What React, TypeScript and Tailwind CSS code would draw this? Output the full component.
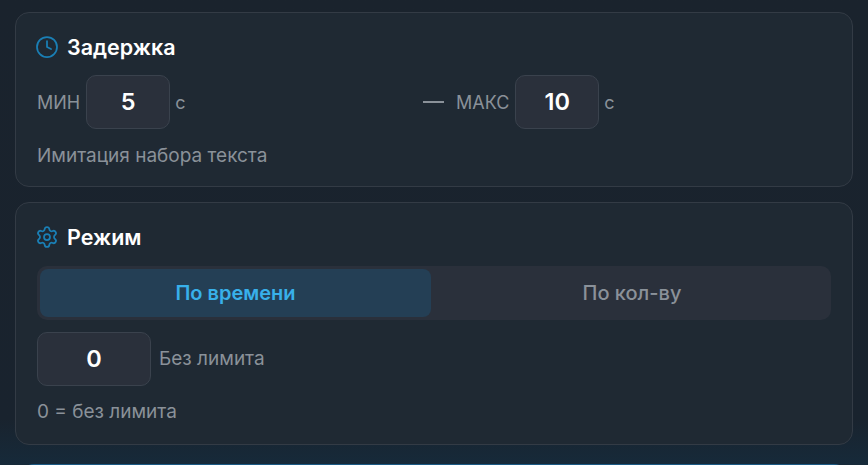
import { Clock, Settings } from 'lucide-react';

function NumBox({ value, width }: { value: string; width: string }) {
  return (
    <div className={`${width} h-[54px] flex items-center justify-center rounded-[10px] border border-[#3a424d] bg-[#2a303b] text-[23.5px] font-semibold text-white`}>
      {value}
    </div>
  );
}

export default function App() {
  return (
    <div className="h-[465px] w-[868px] overflow-hidden bg-gradient-to-b from-[#1a232d] via-[#19232e] via-90% to-[#162a3a] pt-3 px-[15px] font-['Inter','Liberation_Sans',sans-serif]">
      <section className="h-[175px] w-[838px] rounded-[14px] border border-[#333b45] bg-[#1f2933] px-[21px] pt-[20px]">
        <div className="flex h-[28px] items-center gap-2">
          <Clock className="-ml-[2px] h-6 w-6 text-[#1a7fb5]" strokeWidth={1.75} />
          <h3 className="text-[21.5px] font-semibold text-white">Задержка</h3>
        </div>
        <div className="mt-[14px] flex items-center">
          <div className="flex w-[374px] items-center text-[18px] text-[#8a9199]">
            <span className="mr-[6px]">МИН</span>
            <NumBox value="5" width="w-[84px]" />
            <span className="ml-[5px]">с</span>
          </div>
          <div className="mx-3 h-[2px] w-[21px] bg-[#8a9199]" />
          <div className="flex items-center text-[18px] text-[#8a9199]">
            <span className="mr-[6px]">МАКС</span>
            <NumBox value="10" width="w-[84px]" />
            <span className="ml-[5px]">с</span>
          </div>
        </div>
        <p className="mt-[13px] text-[19px] text-[#8a9199]">Имитация набора текста</p>
      </section>

      <section className="mt-[15px] h-[243px] w-[838px] rounded-[14px] border border-[#333b45] bg-[#1f2933] px-[21px] pt-[20px]">
        <div className="flex h-[28px] items-center gap-2">
          <Settings className="-ml-[2px] h-6 w-6 text-[#1a7fb5]" strokeWidth={1.75} />
          <h3 className="text-[21.5px] font-semibold text-white">Режим</h3>
        </div>
        <div className="mt-[15px] flex h-[54px] rounded-[10px] bg-[#2a303b] p-[3px] text-[20px]">
          <button className="w-[391px] rounded-lg bg-[#243f55] font-semibold text-[#38b0ea]">По времени</button>
          <button className="ml-[5px] flex-1 font-medium text-[#8a9199]">По кол-ву</button>
        </div>
        <div className="mt-3 flex items-center gap-2">
          <NumBox value="0" width="w-[114px]" />
          <span className="text-[19px] text-[#8a9199]">Без лимита</span>
        </div>
        <p className="mt-[12px] text-[19px] text-[#8a9199]">0 = без лимита</p>
      </section>

      <div className="mt-[19px] ml-[5px] h-10 w-[828px] rounded-t-[14px] border-t border-[#1b5a85] bg-[#182a3a]" />
    </div>
  );
}
